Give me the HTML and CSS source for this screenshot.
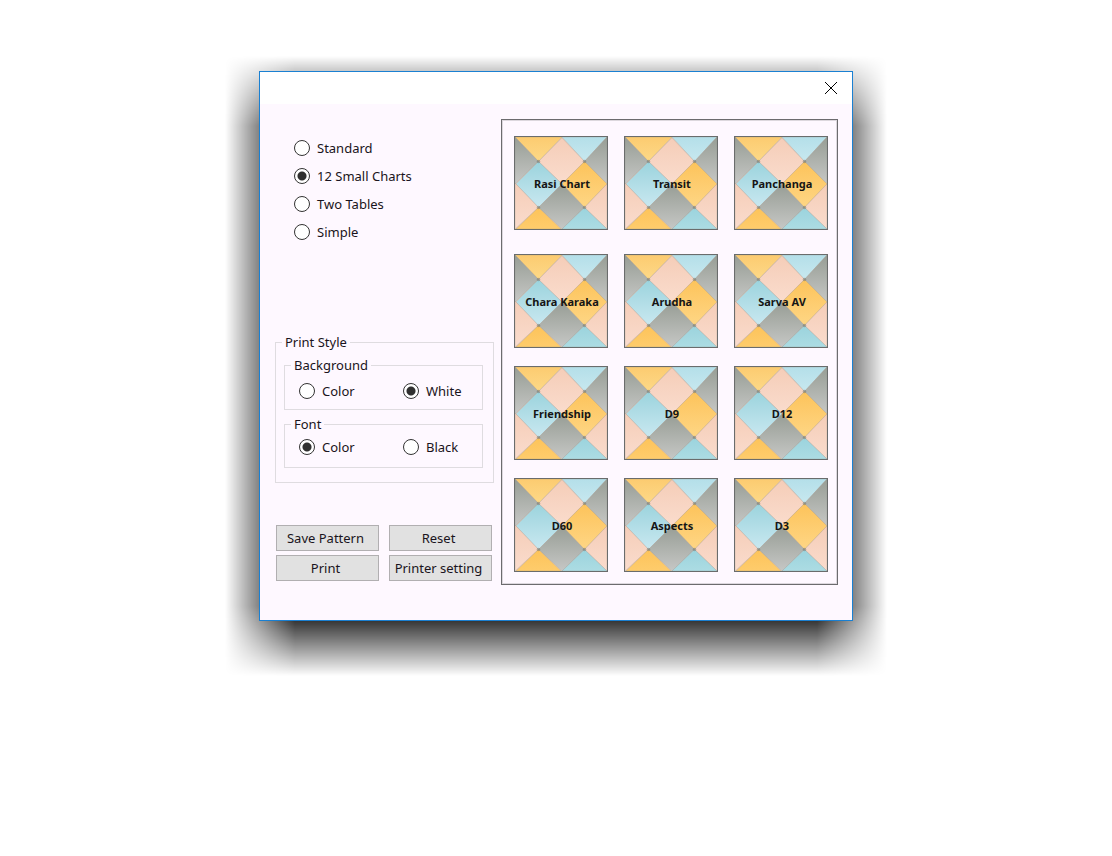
FILE: index.html
```
<!DOCTYPE html>
<html lang="en">
<head>
<meta charset="utf-8">
<meta name="viewport" content="width=device-width, initial-scale=1">
<title>Print charts</title>
<link rel="stylesheet" href="styles.css">
</head>
<body>
<svg class="defs" aria-hidden="true">
  <defs>
    <linearGradient id="gray" x2="0" y2="1"><stop stop-color="#979d95"/><stop offset="1" stop-color="#c6c7c5"/></linearGradient>
    <linearGradient id="peach" x2="0" y2="1"><stop stop-color="#f5cdb8"/><stop offset="1" stop-color="#fadccd"/></linearGradient>
    <linearGradient id="blue" x2="0" y2="1"><stop stop-color="#9bd3dd"/><stop offset="1" stop-color="#c9e8f0"/></linearGradient>
    <linearGradient id="teal" x2="0" y2="1"><stop stop-color="#9bd3dd"/><stop offset="1" stop-color="#acdce3"/></linearGradient>
    <linearGradient id="sky" x2="0" y2="1"><stop stop-color="#b4dfe9"/><stop offset="1" stop-color="#c8e8ef"/></linearGradient>
    <linearGradient id="gold" x2="0" y2="1"><stop stop-color="#fdc35a"/><stop offset="1" stop-color="#fed685"/></linearGradient>
    <linearGradient id="amber" x2="0" y2="1"><stop stop-color="#fdc35a"/><stop offset="1" stop-color="#fecc6c"/></linearGradient>
    <linearGradient id="sand" x2="0" y2="1"><stop stop-color="#fccb70"/><stop offset="1" stop-color="#fdd988"/></linearGradient>
    <symbol id="quilt" viewBox="0 0 94 94" preserveAspectRatio="none">
      <g stroke="#8b887f" stroke-opacity=".35" stroke-width=".7">
        <path fill="url(#sand)" d="M0 0H48L24 25Z"/>
        <path fill="url(#sky)" d="M48 0H94L71 25Z"/>
        <path fill="url(#gray)" d="M0 0L24 25L0 48Z"/>
        <path fill="url(#gray)" d="M94 0V48L71 25Z"/>
        <path fill="url(#peach)" d="M48 1L71 25L48 48L24 25Z"/>
        <path fill="url(#blue)" d="M24 25L48 48L24 72L1 48Z"/>
        <path fill="url(#gold)" d="M71 25L94 48L71 72L48 48Z"/>
        <path fill="url(#gray)" d="M48 48L71 72L48 94L24 72Z"/>
        <path fill="url(#peach)" d="M0 47L24 72L0 94Z"/>
        <path fill="url(#peach)" d="M94 48V94L71 72Z"/>
        <path fill="url(#amber)" d="M1 94L24 72L47 94Z"/>
        <path fill="url(#teal)" d="M48 94L71 72L94 94Z"/>
      </g>
      <g fill="#6f746c" fill-opacity=".5">
        <circle cx="24" cy="25" r="1.8"/><circle cx="71" cy="25" r="1.8"/>
        <circle cx="24" cy="72" r="1.8"/><circle cx="71" cy="72" r="1.8"/>
      </g>
    </symbol>
  </defs>
</svg>
<main class="dialog" role="dialog" aria-label="Print charts">
  <header class="titlebar">
    <button class="close" type="button" aria-label="Close">
      <svg viewBox="0 0 12 12" aria-hidden="true"><path d="M0 0L12 12M12 0L0 12"/></svg>
    </button>
  </header>
  <form class="content">
    <section class="options">
      <div class="layouts" role="radiogroup" aria-label="Layout">
        <label class="choice"><input type="radio" name="layout">Standard</label>
        <label class="choice"><input type="radio" name="layout" checked>12 Small Charts</label>
        <label class="choice"><input type="radio" name="layout">Two Tables</label>
        <label class="choice"><input type="radio" name="layout">Simple</label>
      </div>
      <fieldset class="group style">
        <legend>Print Style</legend>
        <fieldset class="group pair">
          <legend>Background</legend>
          <div class="row">
            <label class="choice"><input type="radio" name="background">Color</label>
            <label class="choice"><input type="radio" name="background" checked>White</label>
          </div>
        </fieldset>
        <fieldset class="group pair font">
          <legend>Font</legend>
          <div class="row">
            <label class="choice"><input type="radio" name="font" checked>Color</label>
            <label class="choice"><input type="radio" name="font">Black</label>
          </div>
        </fieldset>
      </fieldset>
      <div class="actions">
        <button class="action" type="button">Save Pattern</button>
        <button class="action" type="button">Reset</button>
        <button class="action" type="button">Print</button>
        <button class="action" type="button">Printer setting</button>
      </div>
    </section>
    <section class="charts" aria-label="Charts">
      <button class="tile" type="button"><svg class="art" aria-hidden="true"><use href="#quilt"/></svg><span class="name">Rasi Chart</span></button>
      <button class="tile" type="button"><svg class="art" aria-hidden="true"><use href="#quilt"/></svg><span class="name">Transit</span></button>
      <button class="tile" type="button"><svg class="art" aria-hidden="true"><use href="#quilt"/></svg><span class="name">Panchanga</span></button>
      <button class="tile" type="button"><svg class="art" aria-hidden="true"><use href="#quilt"/></svg><span class="name">Chara Karaka</span></button>
      <button class="tile" type="button"><svg class="art" aria-hidden="true"><use href="#quilt"/></svg><span class="name">Arudha</span></button>
      <button class="tile" type="button"><svg class="art" aria-hidden="true"><use href="#quilt"/></svg><span class="name">Sarva AV</span></button>
      <button class="tile" type="button"><svg class="art" aria-hidden="true"><use href="#quilt"/></svg><span class="name">Friendship</span></button>
      <button class="tile" type="button"><svg class="art" aria-hidden="true"><use href="#quilt"/></svg><span class="name">D9</span></button>
      <button class="tile" type="button"><svg class="art" aria-hidden="true"><use href="#quilt"/></svg><span class="name">D12</span></button>
      <button class="tile" type="button"><svg class="art" aria-hidden="true"><use href="#quilt"/></svg><span class="name">D60</span></button>
      <button class="tile" type="button"><svg class="art" aria-hidden="true"><use href="#quilt"/></svg><span class="name">Aspects</span></button>
      <button class="tile" type="button"><svg class="art" aria-hidden="true"><use href="#quilt"/></svg><span class="name">D3</span></button>
    </section>
  </form>
</main>
</body>
</html>
```
FILE: styles.css
```
* {
  box-sizing: border-box;
}

body {
  margin: 0;
  padding: 71px 16px;
  background: #fff;
  color: #1a1420;
  font: 13px/16px "Noto Sans", "Open Sans", sans-serif;
}

button {
  margin: 0;
  padding: 0;
  color: inherit;
  font: inherit;
}

.defs {
  position: absolute;
  width: 0;
  height: 0;
}

.dialog {
  position: relative;
  max-width: 594px;
  margin: 0 auto;
  border: 1px solid #1a80d2;
  background: #fef8ff;
}

/* Drop shadow with a straight-line falloff, 70px wide on every side */
.dialog::before {
  content: "";
  position: absolute;
  z-index: -1;
  inset: -16px -35px -56px;
  background: #000;
  mask-image:
    linear-gradient(to right, transparent, #000 70px, #000 calc(100% - 70px), transparent),
    linear-gradient(to bottom, transparent, #000 70px, #000 calc(100% - 70px), transparent);
  mask-composite: intersect;
}

.titlebar {
  display: flex;
  justify-content: flex-end;
  height: 32px;
  background: #fff;
}

.close {
  display: grid;
  place-items: center;
  width: 42px;
  border: 0;
  background: none;
}

.close svg {
  width: 12px;
  height: 12px;
  overflow: visible;
  fill: none;
  stroke: #000;
}

.content {
  display: flex;
  flex-wrap: wrap;
  align-items: flex-start;
  gap: 7px;
  padding: 15px 14px 35px 15px;
}

.options {
  flex: 1 1 219px;
}

.layouts {
  display: flex;
  flex-direction: column;
  align-items: flex-start;
  gap: 8px;
  padding: 19px 0 0 19px;
}

.choice {
  display: flex;
  align-items: center;
  gap: 7px;
  height: 20px;
}

.choice input {
  appearance: none;
  flex: none;
  width: 16px;
  height: 16px;
  margin: 0;
  border: 1px solid #333;
  border-radius: 50%;
  background: #fff;
}

.choice input:checked {
  background: radial-gradient(circle, #303030 4px, #fff 5px);
}

.group {
  min-width: 0;
  margin: 0;
  padding: 0;
  border: 1px solid #dfdce0;
}

.group legend {
  margin-left: -2px;
  padding: 0 3px;
}

.style {
  margin-top: 92px;
  padding: 7px 10px 14px 8px;
}

.pair {
  padding: 8px 14px;
}

.pair legend {
  margin-left: -8px;
}

.font {
  margin-top: 6px;
  padding: 5px 14px 10px;
}

.row {
  display: grid;
  grid-template-columns: 104px 1fr;
}

.actions {
  display: grid;
  grid-template-columns: 1fr 1fr;
  gap: 4px 10px;
  margin-top: 42px;
  padding: 0 2px 0 1px;
}

.action {
  height: 26px;
  padding-right: 4px;
  border: 1px solid #b1afb1;
  background: #e1e1e1;
}

.charts {
  display: grid;
  grid-template-columns: repeat(3, 94px);
  grid-template-rows: 100px;
  gap: 18px 16px;
  padding: 16px 9px 12px 12px;
  border: 1px solid #6c6b6e;
  box-shadow: inset 0 0 0 1px #dcd7dd;
}

.tile {
  display: grid;
  place-items: center;
  width: 94px;
  height: 94px;
  border: 1px solid #6a6c6c;
  background: #fadccd;
  color: #151515;
  font-size: 11px;
  font-weight: 700;
}

.art,
.name {
  grid-area: 1 / 1;
}

.art {
  width: 92px;
  height: 92px;
}

.name {
  z-index: 1;
  padding: 2px 0 0 2px;
}
```
